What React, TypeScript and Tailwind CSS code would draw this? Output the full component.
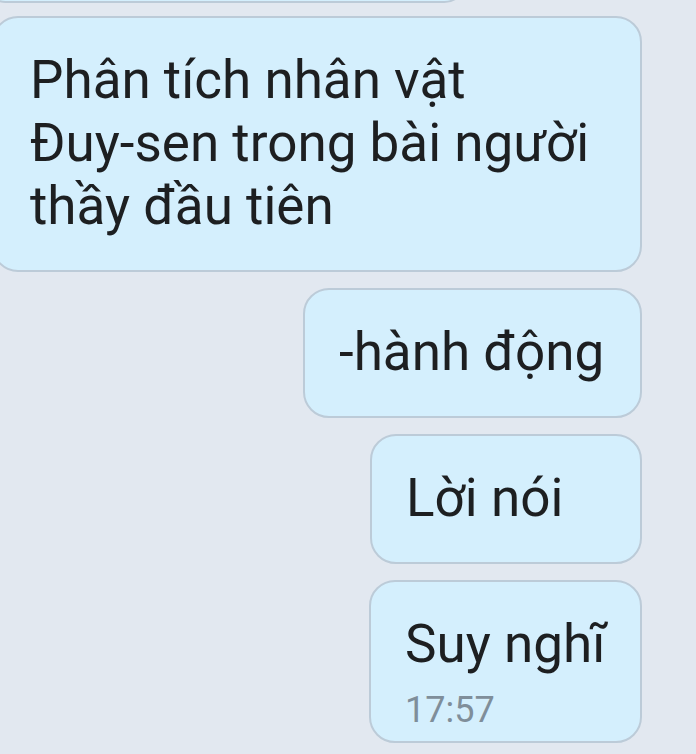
export default function App() {
  const bubble =
    'rounded-[26px] border-2 border-[#bccbd8] bg-[#d4effd] text-[#1d1f21]';

  return (
    <div
      className="h-[754px] w-[696px] overflow-hidden bg-[#e2e8f0] pr-[54px]"
      style={{ fontFamily: 'Roboto, "Noto Sans", sans-serif' }}
    >
      {/* previous bubble, cut at the top */}
      <div className="-ml-4 -mt-[40px] h-[43px] w-[482px] rounded-[26px] border-2 border-[#bccbd8] bg-[#d4effd]" />

      <div className="mt-[13px] flex flex-col items-end gap-[16px]">
        <div className={`${bubble} -ml-2 w-[calc(100%+8px)] self-start px-[36px] pb-[32px] pt-[31px] text-[53px] leading-[63px]`}>
          Phân tích nhân vật
          <br />
          Đuy-sen trong bài người
          <br />
          thầy đầu tiên
        </div>

        <div className={`${bubble} w-[339px] px-[34px] pb-[32px] pt-[31px] text-[53px] leading-[63px]`}>
          -hành động
        </div>

        <div className={`${bubble} w-[272px] px-[34px] pb-[32px] pt-[31px] text-[53px] leading-[63px]`}>
          Lời nói
        </div>

        <div className={`${bubble} w-[273px] px-[34px] pb-[9px] pt-[31px]`}>
          <div className="text-[53px] leading-[63px]">Suy nghĩ</div>
          <div className="mt-[12px] text-[36px] leading-[44px] text-[#7f8e9a]">17:57</div>
        </div>
      </div>
    </div>
  );
}
